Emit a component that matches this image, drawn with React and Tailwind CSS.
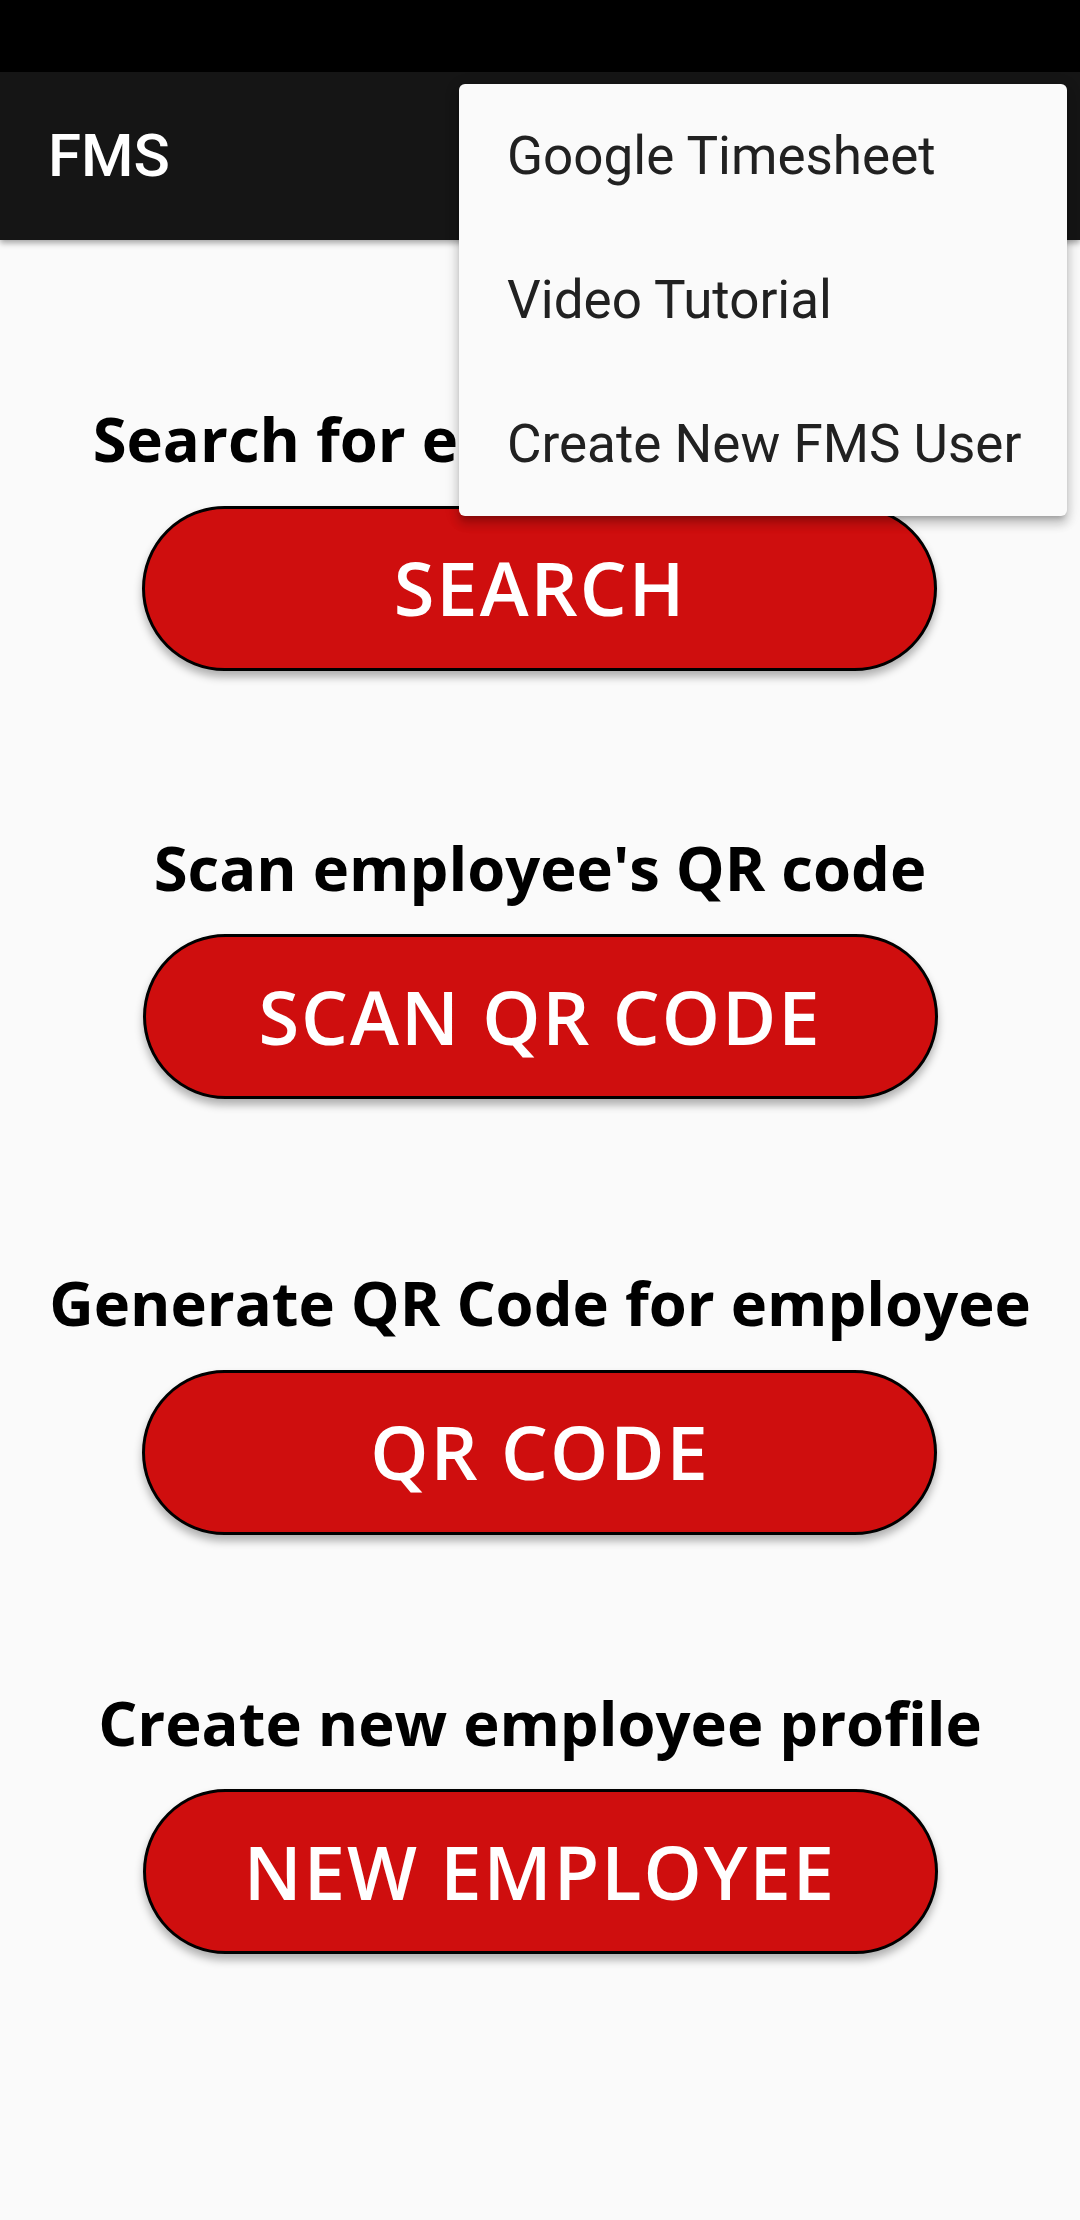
const sections = [
  { title: "Search for employee's profile", label: "SEARCH", gap: "mt-[168px]" },
  { title: "Scan employee's QR code", label: "SCAN QR CODE", gap: "mt-[166px]" },
  { title: "Generate QR Code for employee", label: "QR CODE", gap: "mt-[173px]" },
  { title: "Create new employee profile", label: "NEW EMPLOYEE", gap: "mt-[157px]" },
];

const menuItems = ["Google Timesheet", "Video Tutorial", "Create New FMS User"];

const ActionBlock = ({ title, label, gap }) => (
  <div className={`flex flex-col items-center ${gap}`}>
    <h2 className="text-[61.5px] leading-none font-bold text-black font-['Open_Sans',sans-serif] whitespace-nowrap">
      {title}
    </h2>
    <button className="mt-[36px] h-[165px] w-[795px] rounded-full border-[3px] border-black bg-[#cf0e0e] shadow-[0_6px_8px_rgba(0,0,0,0.3)] flex items-center justify-center">
      <span className="text-[74px] leading-none font-semibold tracking-[2px] text-white font-['Open_Sans',sans-serif]">
        {label}
      </span>
    </button>
  </div>
);

export default function App() {
  return (
    <div className="relative w-[1080px] h-[2220px] bg-[#fafafa] overflow-hidden">
      <div className="h-[72px] bg-black" />
      <header className="relative z-10 h-[168px] bg-[#151515] shadow-[0_3px_6px_rgba(0,0,0,0.35)] flex items-center px-[48px]">
        <h1 className="text-[60px] font-medium text-white font-['Roboto',sans-serif] leading-none">
          FMS
        </h1>
      </header>

      <main className="flex flex-col items-center">
        {sections.map((s) => (
          <ActionBlock key={s.label} {...s} />
        ))}
      </main>

      <div className="absolute z-20 top-[84px] left-[459px] w-[608px] rounded-[6px] bg-[#fafafa] shadow-[0_8px_10px_1px_rgba(0,0,0,0.14),0_3px_14px_2px_rgba(0,0,0,0.12),0_5px_5px_-3px_rgba(0,0,0,0.2)]">
        {menuItems.map((item) => (
          <div
            key={item}
            className="h-[144px] flex items-center px-[48px] text-[53px] text-[#212121] font-['Roboto',sans-serif] leading-none whitespace-nowrap"
          >
            {item}
          </div>
        ))}
      </div>
    </div>
  );
}
